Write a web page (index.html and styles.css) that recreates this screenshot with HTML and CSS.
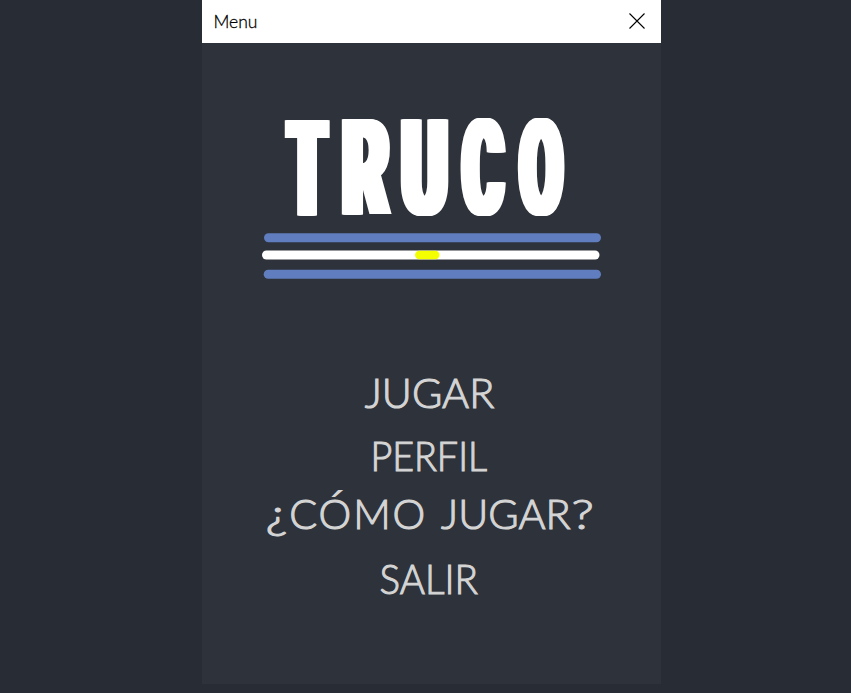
FILE: index.html
```html
<!DOCTYPE html>
<html lang="es">
<head>
<meta charset="utf-8">
<title>Menu</title>
<link rel="stylesheet" href="styles.css">
</head>
<body>
<main class="window">
<header class="titlebar"><span class="title">Menu</span><svg class="close" viewBox="0 0 16 16"><path d="M.5.5l15 15M15.500.5l-15 15"/></svg></header>
<section class="content">
<h1 class="logo"><span class="cell"><span class="letter t">T</span></span><span class="cell"><span class="letter r">R</span></span><span class="cell"><span class="letter u">U</span></span><span class="cell"><span class="letter c">C</span></span><span class="cell"><span class="letter o">O</span></span></h1>
<svg class="stripes" viewBox="0 0 340 48"><rect x="2" y="1.300" width="337" height="9" rx="4.500" fill="#607dbf"/><rect x="0" y="18.500" width="337.500" height="9" rx="4.500" fill="#fff"/><rect x="153" y="18.800" width="24.500" height="8.500" rx="4.200" fill="#f4ff00"/><rect x="1.700" y="37.800" width="337.300" height="9" rx="4.500" fill="#607dbf"/></svg>
<nav class="menu">
<a class="item play">JUGAR</a>
<a class="item profile">PERFIL</a>
<a class="item help"><span class="mark">¿</span><span class="how">CÓMO</span> JUGAR<span class="mark end">?</span></a>
<a class="item exit">SALIR</a>
</nav>
</section>
</main>
</body>
</html>
```
FILE: styles.css
```css
* { box-sizing: border-box; }
body { margin: 0; height: 693px; overflow: hidden; background: #282c34; font-family: Lato, sans-serif; }
.window { width: 459px; height: 684px; margin-left: 202px; background: #2e323a; }
.titlebar { height: 43px; padding: 0 16.5px 2px 11.5px; background: #fff; display: flex; align-items: center; justify-content: space-between; }
.title { font-size: 17.5px; line-height: 20px; padding-top: 2px; font-weight: 300; color: #000; -webkit-text-stroke: .3px #000; }
.close { width: 16px; height: 16px; fill: none; stroke: #000; stroke-width: 1.1; }
.content { display: flex; flex-direction: column; align-items: center; }
.logo { display: grid; grid-template-columns: repeat(5, 58.5px); width: 292.5px; height: 120px; margin: 69px 14px 0 0; color: #fff; font: 900 134px/120px Roboto, sans-serif; }
.cell { display: flex; justify-content: center; min-width: 0; }
.letter {
  flex: none;
  --s: .46;
  --d: 9px;
  transform: translateY(-2.5px) scaleX(var(--s));
  text-shadow:
    calc(var(--d) * -1) 0 0, calc(var(--d) * -.8) 0 0, calc(var(--d) * -.6) 0 0, calc(var(--d) * -.4) 0 0, calc(var(--d) * -.2) 0 0,
    calc(var(--d) * .2) 0 0, calc(var(--d) * .4) 0 0, calc(var(--d) * .6) 0 0, calc(var(--d) * .8) 0 0, var(--d) 0 0;
}
.t { --s: .44; --d: 11px; }
.r { --s: .53; --d: 8.5px; }
.u { --s: .51; --d: 9px; }
.stripes { width: 340px; height: 48px; }
.menu { width: 100%; margin-top: 82px; display: flex; flex-direction: column; align-items: center; }
.item { height: 62px; color: #d4d4d4; font-size: 40.5px; line-height: 62px; font-weight: 300; white-space: nowrap; -webkit-text-stroke: 1.1px #d4d4d4; }
.play { transform: translateX(-2px) scaleX(1.02); }
.profile { margin-top: 1px; transform: translateX(-3px) scaleX(.93); }
.help { margin-top: -4px; transform: translateX(-2px) scaleX(1.02); word-spacing: 4px; }
.how { letter-spacing: 1.8px; }
.mark { display: inline-block; transform: scaleX(1.25); margin-right: 4px; }
.end { margin: 0 0 0 3px; }
.exit { margin-top: 3px; transform: translateX(-3px) scaleX(.95); }
```
